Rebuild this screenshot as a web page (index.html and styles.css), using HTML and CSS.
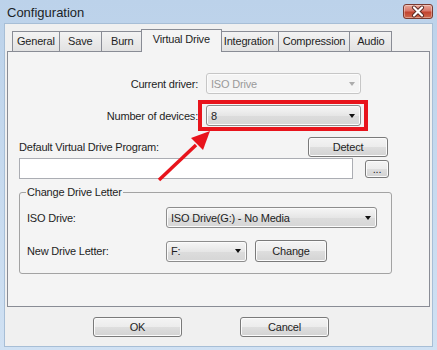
FILE: index.html
```html
<!DOCTYPE html>
<html lang="en">

<head>
    <meta charset="UTF-8" />
    <title>Configuration</title>
    <link rel="stylesheet" href="styles.css">
</head>

<body>
    <div class="window">
        <div class="titlebar">
            <span class="title">Configuration</span>
            <span class="close">
                <svg width="30" height="15" viewBox="0 0 30 15">
                    <path d="M11 3.5 L19 11.5 M19 3.5 L11 11.5" stroke="#5a2a24" stroke-width="4" stroke-linecap="round" />
                    <path d="M11 3.5 L19 11.5 M19 3.5 L11 11.5" stroke="#ffffff" stroke-width="2.2" stroke-linecap="round" />
                </svg>
            </span>
        </div>

        <div class="client">
            <div class="tabs">
                <span class="tab">General</span>
                <span class="tab">Save</span>
                <span class="tab">Burn</span>
                <span class="tab active">Virtual Drive</span>
                <span class="tab">Integration</span>
                <span class="tab">Compression</span>
                <span class="tab">Audio</span>
            </div>

            <div class="panel">
                <div class="setting">
                    <label>Current driver:</label>
                    <div class="combo disabled">ISO Drive<span class="caret"></span></div>
                </div>
                <div class="setting">
                    <label>Number of devices:</label>
                    <div class="combo combo-devices">8<span class="caret"></span><span class="callout"></span></div>
                </div>

                <div class="program-row">
                    <label>Default Virtual Drive Program:</label>
                    <button class="btn btn-detect">Detect</button>
                </div>
                <div class="path-row">
                    <input type="text" class="path" />
                    <button class="btn btn-browse">...</button>
                </div>

                <fieldset class="group">
                    <legend>Change Drive Letter</legend>
                    <div class="group-row">
                        <label>ISO Drive:</label>
                        <div class="combo combo-iso">ISO Drive(G:) - No Media<span class="caret"></span></div>
                    </div>
                    <div class="group-row">
                        <label>New Drive Letter:</label>
                        <div class="combo combo-letter">F:<span class="caret"></span></div>
                        <button class="btn btn-change">Change</button>
                    </div>
                </fieldset>
            </div>

            <div class="actions">
                <button class="btn btn-action">OK</button>
                <button class="btn btn-action">Cancel</button>
            </div>
        </div>

        <!-- annotation arrow pointing at the devices combo -->
        <svg class="arrow" width="437" height="350" viewBox="0 0 437 350">
            <line x1="159" y1="180" x2="196" y2="145" stroke="#e8141c" stroke-width="3.5" />
            <polygon points="210,131 203,150 191,138" fill="#e8141c" />
        </svg>
    </div>
</body>

</html>
```

FILE: styles.css
```css
* {
    box-sizing: border-box;
}

body {
    margin: 0;
    font-family: 'Liberation Sans', Arial, sans-serif;
    font-size: 11px;
    letter-spacing: -0.2px;
    color: #1e1e1e;
    background: #c6daef;
}

.window {
    position: relative;
    width: 437px;
    height: 350px;
    display: flex;
    flex-direction: column;
    background: linear-gradient(#bcd2ea, #d0e1f3);
    overflow: hidden;
}

.titlebar {
    height: 24px;
    flex: none;
    display: flex;
    align-items: center;
    justify-content: space-between;
    padding: 0 4px 0 7px;
}

.title {
    font-size: 13px;
    letter-spacing: 0;
    color: #1b1f26;
}

.close {
    width: 30px;
    height: 15px;
    display: flex;
    border: 1px solid #7b3a30;
    border-radius: 3px;
    background: linear-gradient(#e9a897 0%, #d9776a 45%, #c2432f 55%, #cf6a4e 100%);
    box-shadow: inset 0 0 0 1px rgba(255, 255, 255, 0.35);
    align-self: flex-start;
    margin-top: 4px;
    overflow: hidden;
}

.close svg {
    margin: -1px;
}

.client {
    flex: 1;
    margin: 0 5px 4px;
    padding: 5px 2px 0;
    background: #f0f0f0;
    box-shadow: 0 0 0 1px #a7bed6;
}

/* Tabs */
.tabs {
    display: flex;
    align-items: flex-end;
    padding-left: 5px;
}

.tab {
    height: 20px;
    min-width: 43px;
    padding: 0 4px;
    line-height: 19px;
    text-align: center;
    border: 1px solid #898c95;
    border-bottom: none;
    margin-right: -1px;
    background: linear-gradient(#f3f3f3, #e2e2e2);
}

.tab.active {
    position: relative;
    z-index: 1;
    height: 23px;
    margin: 0 -3px -1px -2px;
    padding: 0 11px;
    line-height: 18px;
    background: #f4f4f4;
}

.panel {
    height: 256px;
    border: 1px solid #898c95;
    background: #f4f4f4;
    padding: 21px 37px 0 11px;
}

/* Controls */
.combo {
    position: relative;
    height: 21px;
    display: flex;
    align-items: center;
    padding: 0 5px 0 4px;
    border: 1px solid #8d8d8d;
    border-radius: 3px;
    background: linear-gradient(#f6f6f6, #e6e6e6 50%, #dcdcdc 51%, #d6d6d6);
    box-shadow: inset 0 0 0 1px #fbfbfb;
}

.caret {
    margin-left: auto;
    width: 0;
    height: 0;
    border-left: 3.5px solid transparent;
    border-right: 3.5px solid transparent;
    border-top: 4px solid #111;
}

.combo.disabled {
    color: #9a9a9a;
    border-color: #c6c6c6;
    background: #f4f4f4;
}

.combo.disabled .caret {
    border-top-color: #acacac;
}

.btn {
    font-family: inherit;
    font-size: 11px;
    letter-spacing: -0.2px;
    color: #1e1e1e;
    padding: 0;
    border: 1px solid #7a7a7a;
    border-radius: 3px;
    background: linear-gradient(#f4f4f4, #ececec 50%, #dedede 51%, #d3d3d3);
    box-shadow: inset 0 0 0 1px #fbfbfb;
}

.setting {
    display: flex;
    align-items: center;
    gap: 8px;
}

.setting + .setting {
    margin-top: 11px;
}

.setting label {
    width: 179px;
    text-align: right;
}

.setting .combo {
    width: 155px;
}

.callout {
    position: absolute;
    top: -6px;
    left: -9px;
    right: -8px;
    bottom: -6px;
    border: 4px solid #e8141c;
}

.program-row {
    margin-top: 11px;
    display: flex;
    align-items: center;
    justify-content: space-between;
}

.btn-detect {
    width: 80px;
    height: 20px;
    margin-right: 4px;
}

.path-row {
    margin-top: 1px;
    display: flex;
    align-items: center;
}

.path {
    width: 334px;
    height: 21px;
    border: 1px solid #abadb3;
    background: #fff;
}

.btn-browse {
    width: 24px;
    height: 18px;
    margin-left: 12px;
    line-height: 10px;
}

/* Group box */
.group {
    margin: 7px 0 0;
    padding: 8px 10px 11px 7px;
    border: 1px solid #a3a3a3;
    border-radius: 3px;
    min-inline-size: 0;
}

.group legend {
    padding: 0 1px;
    margin-left: -1px;
    line-height: 13px;
}

.group-row {
    display: flex;
    align-items: center;
}

.group-row + .group-row {
    margin-top: 12px;
}

.group-row label {
    width: 139px;
}

.combo-iso {
    width: 211px;
}

.combo-letter {
    width: 81px;
}

.btn-change {
    width: 72px;
    height: 22px;
    margin-left: 8px;
}

.actions {
    display: flex;
    gap: 58px;
    margin-top: 10px;
    padding-left: 86px;
}

.btn-action {
    width: 89px;
    height: 20px;
}

.arrow {
    position: absolute;
    top: 0;
    left: 0;
    pointer-events: none;
    z-index: 2;
}
```
